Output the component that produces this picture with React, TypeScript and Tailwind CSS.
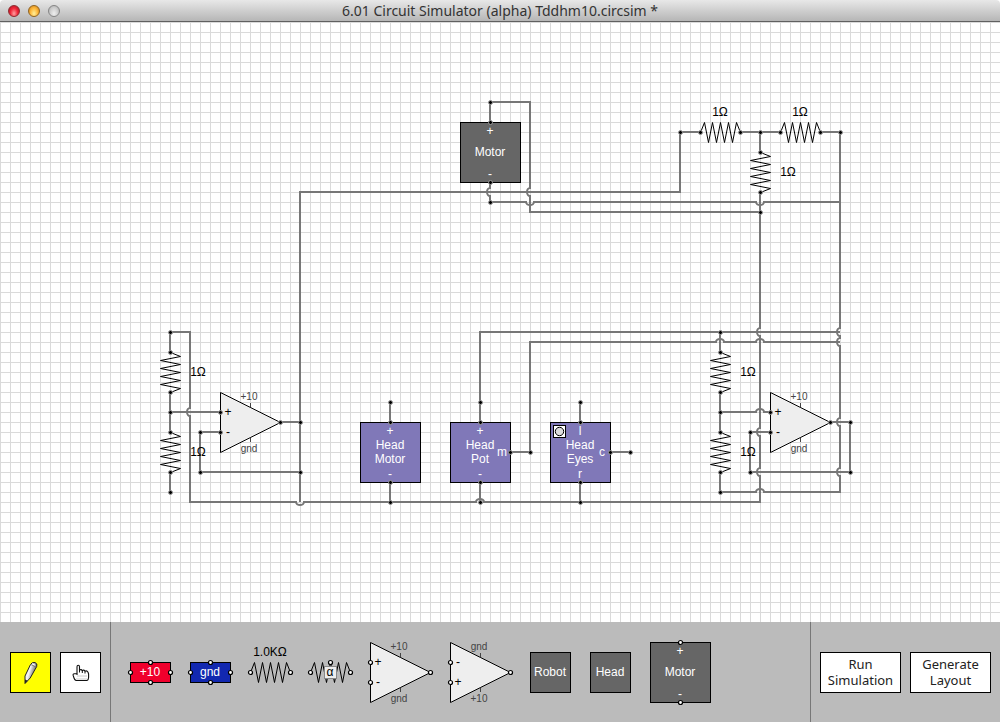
import React from "react";

type Point = [number, number];
type Side = "left" | "up" | "down";
type Hop = { at: number; side: Side };

const WIRE = "#777777";

/* Builds a straight wire that hops in a small arc over each crossing. */
function wirePath([x1, y1]: Point, [x2, y2]: Point, hops: Hop[] = []) {
  const half = 4;
  const bulge = 3;
  let d = `M${x1} ${y1}`;
  for (const { at, side } of hops) {
    if (x1 === x2) {
      d += `V${at - half}a${bulge} ${half} 0 0 0 0 ${2 * half}`;
    } else {
      d += `H${at - half}a${half} ${bulge} 0 0 ${side === "up" ? 1 : 0} ${2 * half} 0`;
    }
  }
  return d + `L${x2} ${y2}`;
}

const left = (...ys: number[]): Hop[] => ys.map((at) => ({ at, side: "left" }));
const up = (...xs: number[]): Hop[] => xs.map((at) => ({ at, side: "up" }));
const down = (...xs: number[]): Hop[] => xs.map((at) => ({ at, side: "down" }));

const wires: [Point, Point, Hop[]?][] = [
  [[490, 100], [490, 79]],
  [[490, 80], [531, 80]],
  [[530, 80], [530, 191], left(170)],
  [[530, 190], [760, 190]],
  [[490, 160], [490, 180], left(170)],
  [[490, 180], [840, 180], down(530, 760)],
  [[299, 170], [680, 170]],
  [[680, 171], [680, 110]],
  [[680, 110], [700, 110]],
  [[740, 110], [780, 110]],
  [[820, 110], [840, 110]],
  [[760, 110], [760, 130]],
  [[760, 170], [760, 480], left(310, 410, 450)],
  [[840, 110], [840, 471], left(310, 320, 400, 450)],
  [[479, 310], [840, 310]],
  [[480, 310], [480, 400]],
  [[529, 320], [840, 320], up(720, 760)],
  [[530, 320], [530, 430]],
  [[510, 430], [530, 430]],
  [[300, 170], [300, 480]],
  [[170, 310], [191, 310]],
  [[190, 310], [190, 481], left(390)],
  [[190, 480], [761, 480], [...down(300), ...up(480)]],
  [[170, 310], [170, 330]],
  [[170, 370], [170, 410]],
  [[170, 390], [220, 390]],
  [[170, 450], [170, 470]],
  [[220, 410], [200, 410]],
  [[200, 410], [200, 450]],
  [[200, 450], [300, 450]],
  [[280, 400], [300, 400]],
  [[390, 380], [390, 400]],
  [[390, 460], [390, 480]],
  [[480, 460], [480, 480]],
  [[580, 380], [580, 400]],
  [[580, 460], [580, 480]],
  [[610, 430], [630, 430]],
  [[720, 310], [720, 330]],
  [[720, 370], [720, 410]],
  [[720, 450], [720, 471]],
  [[720, 470], [840, 470], up(760)],
  [[720, 390], [770, 390], up(760)],
  [[770, 410], [750, 410]],
  [[750, 410], [750, 450]],
  [[750, 450], [850, 450]],
  [[850, 450], [850, 400]],
  [[830, 400], [850, 400]],
];

const joints: Point[] = [
  [490, 80], [490, 100], [490, 160], [490, 180], [760, 190],
  [680, 110], [700, 110], [740, 110], [760, 110], [780, 110], [820, 110], [840, 110],
  [760, 130], [760, 170],
  [170, 310], [170, 330], [170, 370], [170, 390], [170, 410], [170, 450], [170, 470],
  [220, 390], [220, 410], [200, 410], [200, 450], [300, 450], [280, 400], [300, 400],
  [390, 380], [390, 400], [390, 460], [390, 480],
  [480, 380], [480, 400], [480, 460], [480, 480], [510, 430], [530, 430],
  [580, 380], [580, 400], [580, 460], [580, 480], [610, 430], [630, 430],
  [720, 310], [720, 330], [720, 370], [720, 390], [720, 410], [720, 450], [720, 470],
  [770, 390], [770, 410], [750, 410], [750, 450], [830, 400], [850, 400], [850, 450],
];

function Label({ x, y, fill = "#fff", size = 12, children }: { x: number; y: number; fill?: string; size?: number; children: React.ReactNode }) {
  return (
    <text x={x} y={y} fill={fill} fontSize={size} textAnchor="middle">
      {children}
    </text>
  );
}

function Joint({ x, y }: { x: number; y: number }) {
  return <circle cx={x + 0.5} cy={y + 0.5} r={2} fill="#000" stroke="#9a9a9a" strokeWidth={1} />;
}

function Terminal({ x, y }: { x: number; y: number }) {
  return <circle cx={x + 0.5} cy={y + 0.5} r={2} fill="#fff" stroke="#000" strokeWidth={1.2} />;
}

function Resistor({ x, y, vertical = false }: { x: number; y: number; vertical?: boolean }) {
  return (
    <path
      transform={`translate(${x + 0.5} ${y + 0.5})${vertical ? " rotate(90)" : ""}`}
      d="M0 0L4 -10L8 10L12 -10L16 10L20 -10L24 10L28 -10L32 10L36 -10L40 0"
      fill="none"
      stroke="#000"
      strokeWidth={1}
    />
  );
}

function OpAmp({ x, y, flipped = false }: { x: number; y: number; flipped?: boolean }) {
  return (
    <g transform={`translate(${x} ${y})`}>
      <path d="M0.5 0.5V60.5L60.5 30.5Z" fill="#eee" stroke="#000" />
      <path d="M30.5 11V15.500M30.500 45.500V50" stroke="#444" />
      <Label x={29} y={8} size={10} fill="#444">{flipped ? "gnd" : "+10"}</Label>
      <Label x={29} y={60} size={10} fill="#444">{flipped ? "+10" : "gnd"}</Label>
      <Label x={8} y={24} fill="#000">{flipped ? "-" : "+"}</Label>
      <Label x={8} y={44} fill="#000">{flipped ? "+" : "-"}</Label>
    </g>
  );
}

function Block({ x, y, size = 60, color, lines, top, bottom, right }: {
  x: number; y: number; size?: number; color: string; lines: string[]; top?: string; bottom?: string; right?: string;
}) {
  const first = size / 2 + 4 - (lines.length - 1) * 7;
  return (
    <g transform={`translate(${x} ${y})`}>
      <rect x={0.5} y={0.5} width={size} height={size} fill={color} stroke="#000" />
      {lines.map((line, i) => (
        <Label key={line} x={size / 2} y={first + i * 14}>{line}</Label>
      ))}
      {top && <Label x={size / 2} y={13}>{top}</Label>}
      {bottom && <Label x={size / 2} y={56}>{bottom}</Label>}
      {right && <Label x={size - 8} y={size / 2 + 4}>{right}</Label>}
    </g>
  );
}

function Circuit() {
  return (
    <svg className="block h-full min-h-[600px] w-full font-['Liberation_Sans',sans-serif]" role="img" aria-label="Circuit diagram">
      <g fill="none" stroke={WIRE} strokeWidth={2}>
        {wires.map(([a, b, hops], i) => (
          <path key={i} d={wirePath(a, b, hops)} />
        ))}
      </g>
      <Resistor x={700} y={110} />
      <Resistor x={780} y={110} />
      <Resistor x={760} y={130} vertical />
      <Resistor x={170} y={330} vertical />
      <Resistor x={170} y={410} vertical />
      <Resistor x={720} y={330} vertical />
      <Resistor x={720} y={410} vertical />
      <Label x={720} y={94} fill="#000">1Ω</Label>
      <Label x={800} y={94} fill="#000">1Ω</Label>
      <Label x={788} y={154} fill="#000">1Ω</Label>
      <Label x={198} y={354} fill="#000">1Ω</Label>
      <Label x={198} y={434} fill="#000">1Ω</Label>
      <Label x={748} y={354} fill="#000">1Ω</Label>
      <Label x={748} y={434} fill="#000">1Ω</Label>
      <OpAmp x={220} y={370} />
      <OpAmp x={770} y={370} />
      <Block x={460} y={100} color="#666" lines={["Motor"]} top="+" bottom="-" />
      <Block x={360} y={400} color="#8078b8" lines={["Head", "Motor"]} top="+" bottom="-" />
      <Block x={450} y={400} color="#8078b8" lines={["Head", "Pot"]} top="+" bottom="-" right="m" />
      <Block x={550} y={400} color="#8078b8" lines={["Head", "Eyes"]} top="l" bottom="r" right="c" />
      <rect x={553.5} y={403.5} width={12} height={12} fill="#fff" stroke="#000" />
      <circle cx={559.5} cy={409.5} r={4.2} fill="#ddd" stroke="#000" />
      {joints.map(([x, y]) => (
        <Joint key={`${x},${y}`} x={x} y={y} />
      ))}
    </svg>
  );
}

function Part({ label, wide = false, children }: { label: string; wide?: boolean; children: React.ReactNode }) {
  return (
    <button type="button" aria-label={label} className={wide ? "block h-[60px] w-[60px]" : "block h-[60px] w-10"}>
      <svg className="block h-full w-full overflow-visible font-['Liberation_Sans',sans-serif]">{children}</svg>
    </button>
  );
}

function Source({ color, name }: { color: string; name: string }) {
  return (
    <>
      <rect x={0.5} y={20.5} width={40} height={20} fill={color} stroke="#000" />
      <Label x={20} y={34}>{name}</Label>
      <Terminal x={0} y={30} />
      <Terminal x={40} y={30} />
      <Terminal x={20} y={20} />
      <Terminal x={20} y={40} />
    </>
  );
}

function Pencil() {
  return (
    <svg viewBox="0 0 16 24" className="h-6 w-4" aria-hidden="true">
      <defs>
        <linearGradient id="pencil" x1="0.2" y1="0.3" x2="0.8" y2="0.6">
          <stop offset="0.3" stopColor="#f4f4f4" />
          <stop offset="0.8" stopColor="#8a8a8a" />
        </linearGradient>
      </defs>
      <path d="M2 22.500L2 15L7.500 3.500Q9 0.800 12 1.500Q14.800 2.500 13.700 5.500L7.200 17Z" fill="url(#pencil)" stroke="#222" strokeLinejoin="round" />
      <path d="M2 22.500L2 18.500L4.800 19.800Z" fill="#222" />
      <path d="M8 3.500L12.800 6" stroke="#666" strokeWidth="0.800" />
      <path d="M9.500 3.200L12.300 4.200" stroke="#fff" strokeWidth="1" />
    </svg>
  );
}

function Hand() {
  return (
    <svg viewBox="0 0 18 18" className="h-[18px] w-[18px]" aria-hidden="true">
      <path d="M4 16.500Q2.500 15.800 2 14L1.200 11.500Q0.700 9.800 2.200 9.800H5V2.800Q5 1.200 6.300 1.200Q7.500 1.200 7.500 2.800V6.200Q9 4.800 10.300 6.600Q12 5.400 13 7.200Q15 6.300 16 8.200L16.600 10V13.500Q16.500 16 15 16.500Z" fill="#fff" stroke="#111" strokeWidth="1.100" strokeLinejoin="round" />
      <path d="M7.500 6V8.500M10.300 6.700V9M13 7.300V9.500M5 9.800V11" stroke="#111" />
      <path d="M5.500 12H14.500" stroke="#999" strokeDasharray="1 1" />
      <path d="M4 15H15" stroke="#ccc" />
    </svg>
  );
}

function ToolButton({ label, className, children }: { label: string; className: string; children: React.ReactNode }) {
  return (
    <button type="button" aria-label={label} className={"flex h-[41px] w-[41px] items-center justify-center border border-black " + className}>
      {children}
    </button>
  );
}

function ActionButton({ children }: { children: React.ReactNode }) {
  return (
    <button type="button" className="flex h-[41px] w-[81px] items-center justify-center border border-black bg-white pb-0.5 text-center text-[13px] leading-4 text-[#222]">
      <span>{children}</span>
    </button>
  );
}

export default function App() {
  return (
    <div className="flex min-h-screen flex-col bg-white font-['Noto_Sans',sans-serif]">
      <header className="relative flex h-[22px] items-center justify-center rounded-t border-b border-[#606060] bg-linear-to-b from-[#e8e8e8] to-[#b6b6b6]">
        <div className="absolute left-2 flex gap-2">
          <button type="button" aria-label="Close" className="h-3 w-3 rounded-full border border-[#8e2b2f] bg-radial-[at_50%_75%] from-[#ffa0a0] via-[#f0283a] to-[#a80d1c]" />
          <button type="button" aria-label="Minimize" className="h-3 w-3 rounded-full border border-[#8f6420] bg-radial-[at_50%_75%] from-[#fff09a] via-[#fdb93c] to-[#c87410]" />
          <button type="button" aria-label="Zoom" className="h-3 w-3 rounded-full border border-[#858585] bg-radial-[at_50%_75%] from-[#eeeeee] via-[#d0d0d0] to-[#a8a8a8]" />
        </div>
        <h1 className="text-[14px] leading-5 text-[#333]">6.01 Circuit Simulator (alpha) Tddhm10.circsim *</h1>
      </header>

      <main className="flex-1 bg-[linear-gradient(to_right,#dadada_1px,transparent_1px),linear-gradient(to_bottom,#dadada_1px,transparent_1px)] bg-size-[10px_10px]">
        <Circuit />
      </main>

      <footer className="flex bg-[#bbbbbb]">
        <div className="flex w-[110px] gap-[9px] pt-[30px] pl-[10px]">
          <ToolButton label="Draw wires" className="bg-[#ffff00]"><Pencil /></ToolButton>
          <ToolButton label="Drag board" className="bg-white"><Hand /></ToolButton>
        </div>
        <div className="flex flex-1 gap-5 border-x border-[#777] py-5 pl-[19px]">
          <Part label="Power"><Source color="#f0002c" name="+10" /></Part>
          <Part label="Ground"><Source color="#1228b0" name="gnd" /></Part>
          <Part label="Resistor">
            <Resistor x={0} y={30} />
            <Terminal x={0} y={30} />
            <Terminal x={40} y={30} />
            <Label x={20} y={14} fill="#000">1.0KΩ</Label>
          </Part>
          <Part label="Potentiometer">
            <Resistor x={0} y={30} />
            <rect x={14.5} y={24.5} width={12} height={12} fill="#eee" stroke="#888" />
            <Label x={20} y={34} fill="#000">α</Label>
            <Terminal x={0} y={30} />
            <Terminal x={40} y={30} />
            <Terminal x={20} y={20} />
          </Part>
          <Part label="Op amp" wide>
            <OpAmp x={0} y={0} />
            <Terminal x={0} y={20} />
            <Terminal x={0} y={40} />
            <Terminal x={60} y={30} />
          </Part>
          <Part label="Inverted op amp" wide>
            <OpAmp x={0} y={0} flipped />
            <Terminal x={0} y={20} />
            <Terminal x={0} y={40} />
            <Terminal x={60} y={30} />
          </Part>
          <Part label="Robot"><Block x={0} y={10} size={40} color="#666" lines={["Robot"]} /></Part>
          <Part label="Head"><Block x={0} y={10} size={40} color="#666" lines={["Head"]} /></Part>
          <Part label="Motor" wide>
            <Block x={0} y={0} color="#666" lines={["Motor"]} top="+" bottom="-" />
            <Terminal x={30} y={0} />
            <Terminal x={30} y={60} />
          </Part>
        </div>
        <div className="flex w-[189px] gap-[9px] pt-[30px] pl-[9px]">
          <ActionButton>Run<br />Simulation</ActionButton>
          <ActionButton>Generate<br />Layout</ActionButton>
        </div>
      </footer>
    </div>
  );
}
